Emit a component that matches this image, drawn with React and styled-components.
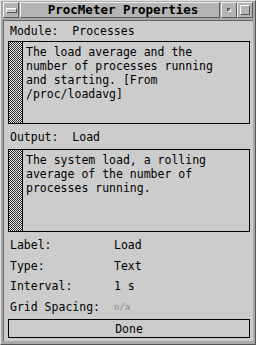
import styled, { createGlobalStyle } from "styled-components";

const GlobalStyle = createGlobalStyle`
  html, body {
    margin: 0;
    padding: 0;
    background: #8c8c8c;
  }
`;

const mono = `"DejaVu Sans Mono", "Liberation Mono", monospace`;

const App = () => {
  return (
    <>
      <GlobalStyle />
      <Frame>
        <TitleBar>
          <FrameButton>
            <MenuGlyph />
          </FrameButton>
          <Title>ProcMeter Properties</Title>
          <FrameButton>
            <IconifyGlyph />
          </FrameButton>
          <FrameButton>
            <MaximizeGlyph />
          </FrameButton>
        </TitleBar>
        <Body>
          <Heading $h={20}>Module:  Processes</Heading>
          <TextBox>
            <Stipple />
            <BoxText>
              The load average and the number of processes running and
              starting. [From /proc/loadavg]
            </BoxText>
          </TextBox>
          <Heading $h={25}>Output:  Load</Heading>
          <TextBox>
            <Stipple />
            <BoxText>
              The system load, a rolling average of the number of processes
              running.
            </BoxText>
          </TextBox>
          <Fields>
            <Field>
              <span>Label:</span>
              <span>Load</span>
            </Field>
            <Field>
              <span>Type:</span>
              <span>Text</span>
            </Field>
            <Field>
              <span>Interval:</span>
              <span>1 s</span>
            </Field>
            <Field>
              <span>Grid Spacing:</span>
              <Disabled>n/a</Disabled>
            </Field>
          </Fields>
          <DoneButton>Done</DoneButton>
        </Body>
      </Frame>
    </>
  );
};
export default App;

/***************************** styled components *****************************/

const Frame = styled.div`
  width: 256px;
  height: 345px;
  box-sizing: border-box;
  background: #a8a8a8;
  border-top: 1px solid #e0e0e0;
  border-left: 1px solid #e0e0e0;
  border-right: 1px solid #555;
  border-bottom: 1px solid #555;
  padding: 1px 2px 3px 2px;
  display: flex;
  flex-direction: column;
  font-family: ${mono};
  color: #000;
`;

const TitleBar = styled.div`
  height: 16px;
  display: flex;
  align-items: stretch;
  margin-bottom: 2px;
`;

const FrameButton = styled.div`
  width: 16px;
  box-sizing: border-box;
  background: #b4b4b4;
  border-top: 1px solid #f0f0f0;
  border-left: 1px solid #f0f0f0;
  border-right: 1px solid #5a5a5a;
  border-bottom: 1px solid #5a5a5a;
  display: flex;
  align-items: center;
  justify-content: center;
`;

const MenuGlyph = styled.div`
  width: 9px;
  height: 3px;
  background: #c8c8c8;
  border-top: 1px solid #fff;
  border-left: 1px solid #fff;
  border-right: 1px solid #555;
  border-bottom: 1px solid #555;
`;

const IconifyGlyph = styled.div`
  width: 2px;
  height: 2px;
  background: #888;
  border-top: 1px solid #555;
  border-left: 1px solid #555;
  border-right: 1px solid #fff;
  border-bottom: 1px solid #fff;
`;

const MaximizeGlyph = styled.div`
  width: 8px;
  height: 8px;
  background: #b4b4b4;
  border-top: 1px solid #fff;
  border-left: 1px solid #fff;
  border-right: 1px solid #555;
  border-bottom: 1px solid #555;
`;

const Title = styled.div`
  flex: 1;
  box-sizing: border-box;
  background: #b4b4b4;
  border-top: 1px solid #f0f0f0;
  border-left: 1px solid #f0f0f0;
  border-right: 1px solid #5a5a5a;
  border-bottom: 1px solid #5a5a5a;
  margin: 0 1px;
  text-align: center;
  font-weight: bold;
  font-size: 12.5px;
  line-height: 14px;
  padding-left: 6px;
  white-space: nowrap;
`;

const Body = styled.div`
  flex: 1;
  background: #cccccc;
  border-top: 1px solid #666;
  border-left: 1px solid #666;
  padding: 0 3px 0 4px;
  display: flex;
  flex-direction: column;
  font-size: 11.5px;
`;

const Heading = styled.div`
  height: ${(p) => p.$h}px;
  display: flex;
  align-items: center;
  padding-left: 2px;
  white-space: pre;
`;

const TextBox = styled.div`
  height: 83px;
  box-sizing: border-box;
  border: 1px solid #000;
  display: flex;
`;

const Stipple = styled.div`
  width: 13px;
  border-right: 1px solid #000;
  background: repeating-conic-gradient(#222 0 25%, #f4f4f4 0 50%) 0 0 / 2px 2px;
`;

const BoxText = styled.div`
  width: 198px;
  padding: 3px 0 0 3px;
  line-height: 14px;
`;

const Fields = styled.div`
  margin-top: 3px;
  display: flex;
  flex-direction: column;
`;

const Field = styled.div`
  height: 20.6px;
  display: grid;
  grid-template-columns: 104px 1fr;
  align-items: center;
  padding-left: 2px;
`;

const Disabled = styled.span`
  color: #8a8a8a;
  font-size: 9px;
`;

const DoneButton = styled.div`
  margin-top: 2px;
  height: 19px;
  box-sizing: border-box;
  border: 1px solid #000;
  display: flex;
  align-items: center;
  justify-content: center;
`;
